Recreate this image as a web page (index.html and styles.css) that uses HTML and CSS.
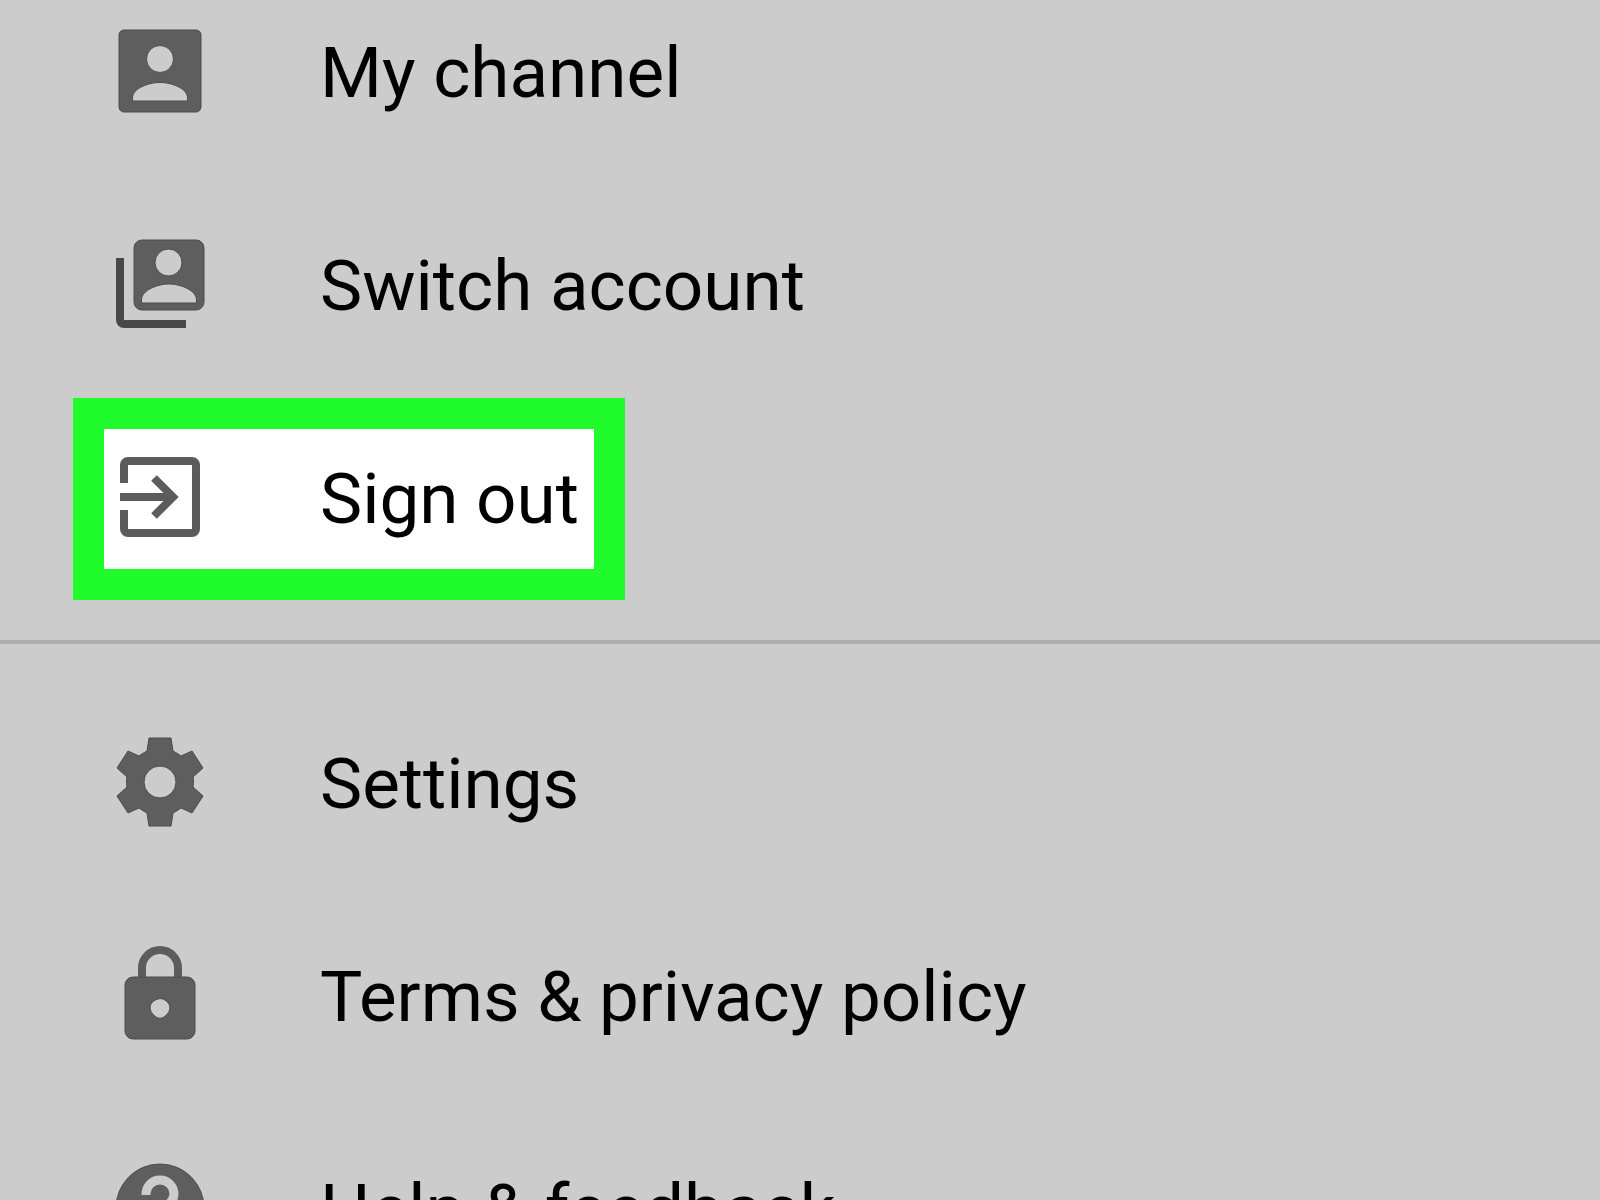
FILE: index.html
```html
<!DOCTYPE html>
<html lang="en">
<head>
<meta charset="utf-8">
<meta name="viewport" content="width=device-width, initial-scale=1">
<title>Account menu</title>
<link rel="stylesheet" href="styles.css">
</head>
<body>
<nav class="menu" aria-label="Account">
  <div class="group group-account">
    <a class="item" href="#channel">
      <svg class="icon" viewBox="0 0 108 108" aria-hidden="true">
        <path class="shape" fill-rule="evenodd" d="M18 13H90A5 5 0 0 1 95 18V90A5 5 0 0 1 90 95H18A5 5 0 0 1 13 90V18A5 5 0 0 1 18 13ZM54 28.500A13.500 13.500 0 1 0 54 55.500A13.500 13.500 0 1 0 54 28.500ZM26.500 84V81C26.500 71 43 65.500 54 65.500S81.500 71 81.500 81V84Z"/>
      </svg>
      <span class="label">My channel</span>
    </a>
    <a class="item" href="#switch">
      <svg class="icon" viewBox="0 0 108 108" aria-hidden="true">
        <path class="shape" fill-rule="evenodd" d="M36 10H90A8 8 0 0 1 98 18V72A8 8 0 0 1 90 80H36A8 8 0 0 1 28 72V18A8 8 0 0 1 36 10ZM62.500 19A13.500 13.500 0 1 0 62.500 46A13.500 13.500 0 1 0 62.500 19ZM35.500 73V70C35.500 60 52 54 63 54S90.500 60 90.500 70V73Z"/>
        <path class="dark" d="M10 28H18V90H80V98H18A8 8 0 0 1 10 90Z"/>
      </svg>
      <span class="label">Switch account</span>
    </a>
    <a class="item item-highlight" href="#signout">
      <svg class="icon" viewBox="0 0 108 108" aria-hidden="true">
        <path class="line" d="M18 40V22A4 4 0 0 1 22 18H86A4 4 0 0 1 90 22V86A4 4 0 0 1 86 90H22A4 4 0 0 1 18 86V67M14 54H66M48 35L67 54L48 73"/>
      </svg>
      <span class="label">Sign out</span>
    </a>
  </div>
  <hr class="divider">
  <div class="group">
    <a class="item" href="#settings">
      <svg class="icon" viewBox="0 0 108 108" aria-hidden="true">
        <path class="shape" fill-rule="evenodd" d="M43 10H65L67 23Q71 25 75 28L86 23L97 40L87 49Q88 54 87 59L97 68L86 85L75 80Q71 83 67 85L65 98H43L41 85Q37 83 33 80L22 85L11 68L21 59Q20 54 21 49L11 40L22 23L33 28Q37 25 41 23ZM54 38A16 16 0 1 0 54 70A16 16 0 1 0 54 38Z"/>
      </svg>
      <span class="label">Settings</span>
    </a>
    <a class="item" href="#terms">
      <svg class="icon" viewBox="0 0 108 108" aria-hidden="true">
        <path class="line" d="M36 38V27A18 18 0 0 1 72 27V38"/>
        <path class="shape" fill-rule="evenodd" d="M27 36H81A8 8 0 0 1 89 44V90A8 8 0 0 1 81 98H27A8 8 0 0 1 19 90V44A8 8 0 0 1 27 36ZM54 57.500Q58 57.500 61 60.500T64 67Q64 70 61 73.500T54 77.500Q50 77 47 73.500T44 67Q44 63 47 60.500T54 57.500Z"/>
      </svg>
      <span class="label">Terms &amp; privacy policy</span>
    </a>
    <a class="item" href="#help">
      <svg class="icon" viewBox="0 0 108 108" aria-hidden="true">
        <circle class="shape" cx="54" cy="54" r="44"/>
        <path class="cutout" d="M40 41V40A14 14 0 0 1 68 40C68 51 54 52 54 67M54 75V84"/>
      </svg>
      <span class="label">Help &amp; feedback</span>
    </a>
  </div>
</nav>
</body>
</html>
```
FILE: styles.css
```css
body {
  margin: 0;
  background: #ccc;
  color: #000;
  font-family: Roboto, sans-serif;
}

.menu {
  height: 100vh;
  overflow: hidden;
}

.group {
  display: flex;
  flex-direction: column;
  align-items: flex-start;
  gap: 11px;
  padding-left: 73px;
}

/* The list is scrolled slightly past its first row. */
.group-account {
  margin-top: -28px;
}

.item {
  display: flex;
  align-items: center;
  gap: 106px;
  box-sizing: border-box;
  min-height: 202px;
  padding: 0 15px 0 2px;
  border: 31px solid transparent;
  color: inherit;
  text-decoration: none;
  white-space: nowrap;
}

.item-highlight {
  background: #fff;
  border-color: #1ffb2b;
}

.icon {
  flex: none;
  width: 108px;
  height: 108px;
  margin-bottom: 4px;
}

.label {
  font-size: 71px;
  line-height: 84px;
}

.shape {
  fill: #5e5e5e;
  stroke: #4c4c4c;
  stroke-width: 1;
}

.dark {
  fill: #484848;
}

.line {
  fill: none;
  stroke: #5c5c5c;
  stroke-width: 8;
}

.cutout {
  fill: none;
  stroke: #ccc;
  stroke-width: 9;
}

.divider {
  height: 4px;
  margin: 40px 0 39px;
  border: 0;
  background: #adadad;
}
```
